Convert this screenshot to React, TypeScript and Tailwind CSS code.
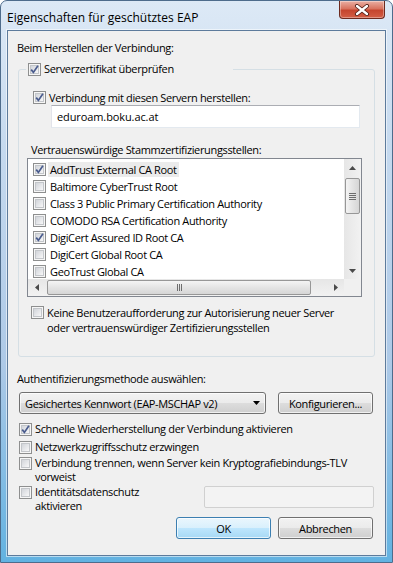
import type { ReactNode } from "react"

const certs = [
  { label: "AddTrust External CA Root", checked: true, active: true },
  { label: "Baltimore CyberTrust Root" },
  { label: "Class 3 Public Primary Certification Authority" },
  { label: "COMODO RSA Certification Authority" },
  { label: "DigiCert Assured ID Root CA", checked: true },
  { label: "DigiCert Global Root CA" },
  { label: "GeoTrust Global CA" },
]

function CheckBox({ checked = false }: { checked?: boolean }) {
  return (
    <span className="relative flex h-[13px] w-[13px] shrink-0 items-center justify-center border border-[#8e8f8f] bg-[#f6f6f6]">
      <span className="h-[9px] w-[9px] border border-[#c3c6ca] bg-gradient-to-br from-[#d2d5da] to-[#f7f7f8]" />
      {checked && (
        <svg className="absolute left-0 top-0" width="11" height="11" viewBox="0 0 11 11">
          <path d="M2.2 5.6 L4.4 8.4 L8.9 1.8" fill="none" stroke="#4a5c8e" strokeWidth="1.7" />
        </svg>
      )}
    </span>
  )
}

function CheckRow({ checked, children, className = "" }: { checked?: boolean; children: ReactNode; className?: string }) {
  return (
    <div className={`flex items-start gap-[3px] ${className}`}>
      <span className="flex h-[1lh] items-center">
        <CheckBox checked={checked} />
      </span>
      <span className="whitespace-nowrap">{children}</span>
    </div>
  )
}

function Button({ children, primary = false, className = "" }: { children: ReactNode; primary?: boolean; className?: string }) {
  return (
    <div
      className={`flex h-[22px] items-center justify-center rounded-[3px] border shadow-[inset_0_0_0_1px_rgba(255,255,255,0.7)] ${
        primary
          ? "border-[#3c7fb1] bg-[linear-gradient(180deg,#eaf6fd_0%,#d9f0fc_49%,#bee6fd_50%,#a7d9f5_100%)]"
          : "border-[#707070] bg-[linear-gradient(180deg,#f2f2f2_0%,#ebebeb_49%,#dddddd_50%,#cfcfcf_100%)]"
      } ${className}`}
    >
      {children}
    </div>
  )
}

function Arrow({ dir }: { dir: "up" | "down" | "left" | "right" }) {
  const pts = {
    up: "3.5,0 7,4 0,4",
    down: "0,0 7,0 3.5,4",
    left: "4,0 4,7 0,3.5",
    right: "0,0 4,3.5 0,7",
  }[dir]
  const vertical = dir === "up" || dir === "down"
  return (
    <svg width={vertical ? 7 : 4} height={vertical ? 4 : 7} viewBox={vertical ? "0 0 7 4" : "0 0 4 7"}>
      <polygon points={pts} fill="#4a4a4a" />
    </svg>
  )
}

function VScroll() {
  return (
    <div className="flex w-[17px] flex-col bg-[linear-gradient(90deg,#e6e6e6,#f2f2f2)]">
      <div className="flex h-[17px] items-center justify-center">
        <Arrow dir="up" />
      </div>
      <div className="mx-[1px] mt-[2px] flex h-[36px] flex-col items-center justify-center gap-[1px] rounded-[2px] border border-[#979797] bg-[linear-gradient(90deg,#f4f4f4,#e4e4e4_50%,#d6d6d6)]">
        <span className="h-[1px] w-[7px] bg-[#6e6e6e]" />
        <span className="h-[1px] w-[7px] bg-[#6e6e6e]" />
        <span className="h-[1px] w-[7px] bg-[#6e6e6e]" />
        <span className="h-[1px] w-[7px] bg-[#6e6e6e]" />
      </div>
      <div className="flex-1" />
      <div className="flex h-[17px] items-center justify-center">
        <Arrow dir="down" />
      </div>
    </div>
  )
}

function HScroll() {
  return (
    <div className="flex h-[17px] flex-1 bg-[linear-gradient(180deg,#e6e6e6,#f2f2f2)]">
      <div className="flex w-[17px] items-center justify-center">
        <Arrow dir="left" />
      </div>
      <div className="my-[1px] ml-[2px] flex w-[264px] items-center justify-center gap-[1px] rounded-[2px] border border-[#979797] bg-[linear-gradient(180deg,#f4f4f4,#e4e4e4_50%,#d6d6d6)]">
        <span className="h-[7px] w-[1px] bg-[#6e6e6e]" />
        <span className="h-[7px] w-[1px] bg-[#6e6e6e]" />
        <span className="h-[7px] w-[1px] bg-[#6e6e6e]" />
      </div>
      <div className="flex-1" />
      <div className="flex w-[17px] items-center justify-center">
        <Arrow dir="right" />
      </div>
    </div>
  )
}

export default function App() {
  return (
    <div className="h-[563px] w-[393px] overflow-hidden bg-white">
      <div className="flex h-[563px] w-[393px] flex-col rounded-t-[7px] border border-[#4e6c8c] bg-[linear-gradient(180deg,#dde9f6_0%,#c6daef_25%,#adc9e7_65%,#62b2e1_100%)] px-[6px] text-[11px] leading-[15px] tracking-[-0.35px] text-black [font-family:'Open_Sans',sans-serif]">
        {/* title bar */}
        <div className="flex h-[29px] items-start">
          <div className="pt-[9px] text-[12px] tracking-normal">Eigenschaften für geschütztes EAP</div>
          <div className="ml-auto mr-[1px] flex h-[18px] w-[46px] items-center justify-center rounded-b-[4px] border border-t-0 border-[#6d2a1f] bg-[linear-gradient(180deg,#eab0a4_0%,#d8735f_45%,#c5452e_55%,#d35e45_100%)] shadow-[inset_0_0_0_1px_rgba(255,255,255,0.35)]">
            <svg width="16" height="12" viewBox="0 0 16 12">
              <path d="M3 2 L13 10 M13 2 L3 10" stroke="#4a1a12" strokeWidth="4" strokeLinecap="round" />
              <path d="M3 2 L13 10 M13 2 L3 10" stroke="#ffffff" strokeWidth="2.4" strokeLinecap="round" />
            </svg>
          </div>
        </div>

        {/* client area */}
        <div className="flex h-[526px] flex-col border border-[#5d7b9c] bg-[#f0f0f0] shadow-[0_0_0_1px_rgba(255,255,255,0.55)]">
          <div className="ml-[9px] mt-[9px]">Beim Herstellen der Verbindung:</div>

          <fieldset className="ml-[10px] mt-[7px] w-[357px] rounded-[3px] border border-[#d5dfe5] pb-[21px]">
            <legend className="ml-[7px] w-[207px] pl-[2px] leading-[14px]">
              <CheckRow checked>Serverzertifikat überprüfen</CheckRow>
            </legend>

            <CheckRow checked className="ml-[14px] mt-[14px]">
              Verbindung mit diesen Servern herstellen:
            </CheckRow>
            <div className="ml-[32px] flex h-[23px] w-[309px] items-center border border-[#e3e9ef] border-l-[#e2e3ea] border-t-[#abadb3] bg-white pl-[5px] tracking-[-0.1px]">
              eduroam.boku.ac.at
            </div>

            <div className="ml-[12px] mt-[14px]">Vertrauenswürdige Stammzertifizierungsstellen:</div>
            <div className="ml-[8px] mt-[1px] flex h-[139px] w-[335px] flex-col border border-[#828790] bg-white">
              <div className="flex min-h-0 flex-1">
                <div className="flex-1 overflow-hidden pt-[2px]">
                  {certs.map((c) => (
                    <div key={c.label} className="flex h-[17px] items-center pl-[5px]">
                      <CheckBox checked={c.checked} />
                      <span className={`ml-[2px] whitespace-nowrap px-[2px] leading-[15px] ${c.active ? "bg-[#ebebeb]" : ""}`}>
                        {c.label}
                      </span>
                    </div>
                  ))}
                </div>
                <VScroll />
              </div>
              <div className="flex">
                <HScroll />
                <div className="h-[17px] w-[17px] bg-[#f0f0f0]" />
              </div>
            </div>

            <CheckRow className="ml-[12px] mt-[8px]">
              Keine Benutzeraufforderung zur Autorisierung neuer Server
              <br />
              oder vertrauenswürdiger Zertifizierungsstellen
            </CheckRow>
          </fieldset>

          <div className="ml-[9px] mt-[14px]">Authentifizierungsmethode auswählen:</div>
          <div className="ml-[11px] mt-[6px] flex gap-[12px]">
            <Button className="w-[247px] !justify-between pl-[5px] pr-[5px]">
              <span>Gesichertes Kennwort (EAP-MSCHAP v2)</span>
              <svg width="7" height="4" viewBox="0 0 7 4">
                <polygon points="0,0 7,0 3.5,4" fill="#000" />
              </svg>
            </Button>
            <Button className="w-[95px]">Konfigurieren...</Button>
          </div>

          <div className="ml-[11px] w-[355px] leading-[14px]">
            <CheckRow checked className="mt-[8px]">
              Schnelle Wiederherstellung der Verbindung aktivieren
            </CheckRow>
            <CheckRow className="mt-[4px]">Netzwerkzugriffsschutz erzwingen</CheckRow>
            <CheckRow className="mt-[2px]">
              Verbindung trennen, wenn Server kein Kryptografiebindungs-TLV
              <br />
              vorweist
            </CheckRow>
            <div className="mt-[1px] flex items-start">
              <CheckRow>
                Identitätsdatenschutz
                <br />
                aktivieren
              </CheckRow>
              <div className="ml-auto mt-[1px] h-[22px] w-[170px] rounded-[2px] border border-[#d0d0d0] bg-[#f3f3f3]" />
            </div>
          </div>

          <div className="mr-[12px] mt-[4px] flex justify-end gap-[7px]">
            <Button primary className="w-[95px]">OK</Button>
            <Button className="w-[95px]">Abbrechen</Button>
          </div>
        </div>
      </div>
    </div>
  )
}
